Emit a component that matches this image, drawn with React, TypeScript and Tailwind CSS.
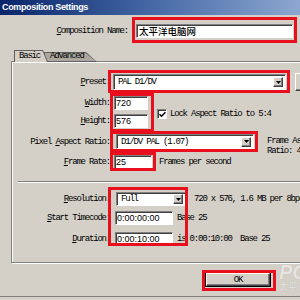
import React from 'react'

const mono = "font-['Liberation_Mono',monospace] text-[9px] leading-[10px] tracking-[-1.2px] text-black whitespace-pre"
const sans = "font-['Liberation_Sans',Arial,sans-serif] text-[9px] leading-[10px] text-black"
const sunken =
  'bg-white border border-t-[#808080] border-l-[#808080] border-b-white border-r-white shadow-[inset_1px_1px_0_#404040]'
const raised =
  'bg-[#d4d0c8] border border-t-white border-l-white border-b-[#404040] border-r-[#404040] shadow-[inset_-1px_-1px_0_#808080]'
const red = 'absolute border-[3px] border-[#e8101c]'

function Label({ pre = '', u, post, w = 'w-[98px]' }: { pre?: string; u: string; post: string; w?: string }) {
  return (
    <span className={`${mono} ${w} shrink-0 text-right`}>
      {pre}
      <span className="underline underline-offset-1">{u}</span>
      {post}
    </span>
  )
}

function DropButton() {
  return (
    <div className={`${raised} w-[10px] h-[10px] flex items-center justify-center mr-[2px] shrink-0`}>
      <svg width="5" height="3" viewBox="0 0 5 3">
        <path d="M0 0h5L2.5 3z" fill="#000" />
      </svg>
    </div>
  )
}

function Select({ value, className }: { value: string; className: string }) {
  return (
    <div className={`${sunken} ${className} flex items-center justify-between shrink-0`}>
      <span className={`${mono} pl-[4px]`}>{value}</span>
      <DropButton />
    </div>
  )
}

function Input({ value, className }: { value: string; className: string }) {
  return (
    <div className={`${sunken} ${className} h-[14px] flex items-center shrink-0`}>
      <span className={`${sans} pl-[1px]`}>{value}</span>
    </div>
  )
}

export default function App() {
  return (
    <div className="relative w-[300px] h-[300px] overflow-hidden bg-[#d4d0c8]">
      <div className="w-[400px] flex flex-col">
        {/* Title bar */}
        <div className="h-[15px] bg-linear-to-r from-[#0a246a] via-[#4a6ca8] via-40% to-[#c0d4ec] flex items-center pl-[2px]">
          <span className="font-['Liberation_Sans',Arial,sans-serif] text-[9px] font-bold tracking-[-0.35px] text-white">
            Composition Settings
          </span>
        </div>

        {/* Composition name */}
        <div className="mt-[9px] h-[14px] flex items-center">
          <Label u="C" post="omposition Name:" w="w-[128px]" />
          <div className={`${sunken} ml-[8px] w-[157px] h-[14px] flex items-center`}>
            <span className="font-['Noto_Sans_CJK_SC',sans-serif] text-[9.5px] leading-[12px] font-medium text-black pl-[2px]">
              太平洋电脑网
            </span>
          </div>
        </div>

        {/* Tabs */}
        <div className="relative z-10 mt-[12px] h-[11px]">
          <div className="absolute left-[44px] top-[2px] w-[53px] h-[10px] bg-[#606060] [clip-path:polygon(0_0,42px_0,53px_100%,0_100%)]">
            <div className="absolute left-[1px] top-[1px] right-0 bottom-[1px] bg-[#aca8a0] [clip-path:polygon(0_0,40.5px_0,50.5px_100%,0_100%)]" />
            <span className={`${mono} absolute left-[6px] top-[-1px]`}>Advanced</span>
          </div>
          <div className="absolute left-[14px] top-0 w-[34px] h-[12px] bg-[#606060] [clip-path:polygon(0_0,29px_0,34px_100%,0_100%)]">
            <div className="absolute left-[1px] top-[1px] right-0 bottom-0 bg-[#d4d0c8] [clip-path:polygon(0_0,27.5px_0,32px_100%,0_100%)]" />
            <span className={`${mono} absolute left-[5px] top-[1px]`}>Basic</span>
          </div>
        </div>

        {/* Panel */}
        <div className="ml-[11px] w-[380px] border border-[#808080] shadow-[inset_1px_1px_0_#fff,1px_1px_0_#fff] flex flex-col pb-[16px]">
          <div className="mt-[12px] h-[16px] flex items-center">
            <Label u="P" post="reset:" />
            <Select value="PAL D1/DV" className="ml-[3px] w-[173px] h-[16px]" />
            <div className={`${raised} ml-[9px] w-[16px] h-[18px]`} />
          </div>

          <div className="mt-[6px] flex items-start">
            <div className="flex flex-col gap-[4px]">
              <div className="h-[14px] flex items-center">
                <Label u="W" post="idth:" />
                <Input value="720" className="ml-[4px] w-[34px]" />
              </div>
              <div className="h-[14px] flex items-center">
                <Label u="H" post="eight:" />
                <Input value="576" className="ml-[4px] w-[34px]" />
              </div>
            </div>
            <div className="ml-[9px] mt-[13px] flex items-center gap-[3px]">
              <div className={`${sunken} w-[10px] h-[10px] flex items-center justify-center`}>
                <svg width="7" height="7" viewBox="0 0 7 7">
                  <path d="M0.5 3.2l2 2 4-4" stroke="#000" strokeWidth="1.6" fill="none" />
                </svg>
              </div>
              <span className={mono}>Lock Aspect Ratio to 5:4</span>
            </div>
          </div>

          <div className="mt-[6px] h-[15px] flex items-start">
            <span className="h-[15px] flex items-center">
              <Label pre="Pixel " u="A" post="spect Ratio:" />
            </span>
            <Select value="D1/DV PAL (1.07)" className="ml-[6px] w-[138px] h-[15px]" />
            <div className={`${mono} ml-[13px] mt-[2px] leading-[9px]`}>
              {'Frame Aspect\nRatio: 4:3'}
            </div>
          </div>

          <div className="mt-[6px] h-[14px] flex items-center">
            <Label u="F" post="rame Rate:" />
            <Input value="25" className="ml-[4px] w-[38px]" />
            <span className={`${mono} ml-[7px]`}>Frames per second</span>
          </div>

          <div className="mt-[12px] ml-[6px] h-[2px] border-t border-[#808080] border-b border-b-white" />

          <div className="mt-[9px] h-[14px] flex items-center">
            <Label u="R" post="esolution:" />
            <Select value="Full" className="ml-[6px] w-[70px] h-[14px]" />
            <span className={`${mono} ml-[8px]`}>720 x 576, 1.6 MB per 8bpc frame</span>
          </div>

          <div className="mt-[5px] h-[14px] flex items-center">
            <Label u="S" post="tart Timecode:" />
            <Input value="0:00:00:00" className="ml-[5px] w-[58px]" />
            <span className={`${mono} ml-[4px]`}>Base 25</span>
          </div>

          <div className="mt-[7px] h-[14px] flex items-center">
            <Label u="D" post="uration:" />
            <Input value="0:00:10:00" className="ml-[5px] w-[58px]" />
            <span className={`${mono} ml-[4px]`}>is 0:00:10:00  Base 25</span>
          </div>
        </div>

        {/* Buttons */}
        <div className="mt-[9px] ml-[205px] flex items-center">
          <div className="w-[66px] h-[15px] border border-black">
            <div className={`${raised} w-full h-full flex items-center justify-center`}>
              <span className={mono}>OK</span>
            </div>
          </div>
        </div>

        <div className="mt-[9px] h-[1px] bg-[#808080]" />
      </div>

      {/* watermark */}
      <div className="absolute left-[279px] top-[263px] flex flex-col items-start opacity-60">
        <span className="font-['Liberation_Sans',Arial,sans-serif] text-[20px] leading-[18px] font-bold italic text-[#f4f4f4] [text-shadow:0_0_1px_#9a9a9a]">
          PC
        </span>
        <span className="font-['Noto_Sans_CJK_SC',sans-serif] text-[9px] leading-[11px] text-[#f4f4f4] [text-shadow:0_0_1px_#9a9a9a]">
          太平洋
        </span>
      </div>

      {/* red annotation boxes */}
      <div className={`${red} left-[132px] top-[17px] w-[165px] h-[26px]`} />
      <div className={`${red} left-[108px] top-[70px] w-[182px] h-[23px]`} />
      <div className={`${red} left-[110px] top-[93px] w-[44px] h-[39px]`} />
      <div className={`${red} left-[110px] top-[131px] w-[148px] h-[21px]`} />
      <div className={`${red} left-[110px] top-[152px] w-[46px] h-[19px]`} />
      <div className={`${red} left-[108px] top-[187px] w-[80px] h-[59px]`} />
      <div className={`${red} left-[202px] top-[270px] w-[74px] h-[21px]`} />
    </div>
  )
}
